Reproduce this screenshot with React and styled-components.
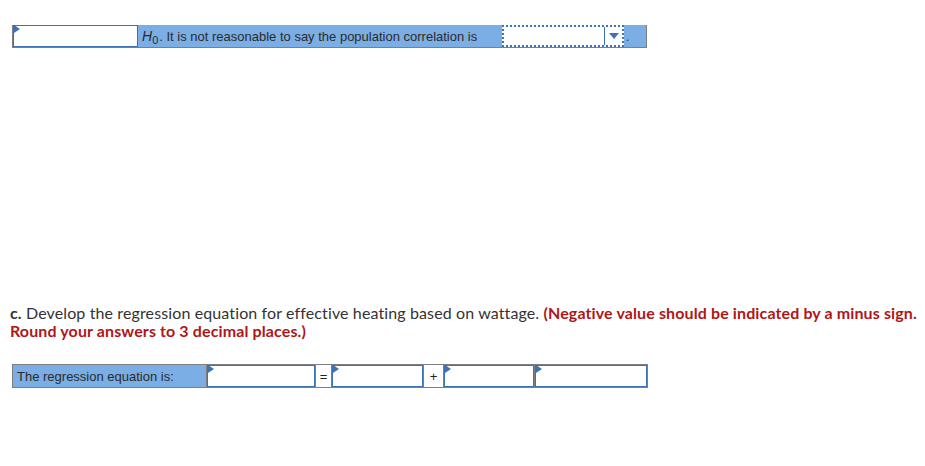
import React from "react";
import styled, { createGlobalStyle } from "styled-components";

const Global = createGlobalStyle`
  html, body { margin: 0; padding: 0; background: #fff; }
  body { font-family: "Liberation Sans", Arial, sans-serif; }
`;

const Page = styled.div`
  width: 925px;
  height: 466px;
  padding: 25px 0 0 13px;
  box-sizing: border-box;
  overflow: hidden;
`;

const TopRow = styled.div`
  display: inline-flex;
  align-items: stretch;
  height: 22px;
  border-left: 1px solid #7f7f7f;
  border-right: 1px solid #7f7f7f;
  border-bottom: 1px solid #7f7f7f;
  margin-left: -1px;
`;

const InputBox = styled.div`
  position: relative;
  width: ${(p) => p.$w}px;
  box-sizing: border-box;
  border: 1px solid #3d72b8;
  background: #fff;
  &::before {
    content: "";
    position: absolute;
    left: 0;
    top: 0;
    border-top: 4px solid transparent;
    border-bottom: 4px solid transparent;
    border-left: 6px solid #3d72b8;
    transform: translateY(-1px);
  }
`;

const BlueCell = styled.div`
  display: flex;
  align-items: center;
  width: ${(p) => p.$w}px;
  box-sizing: border-box;
  background: #7aaee4;
  color: #2b2b2b;
  font-size: 13px;
  padding-left: 4px;
  white-space: nowrap;
`;

const H = styled.i`
  font-style: italic;
  font-size: 14px;
`;

const Sub = styled.span`
  font-size: 11px;
  position: relative;
  top: 4px;
  margin-right: 1px;
`;

const Dropdown = styled.div`
  display: flex;
  width: 122px;
  box-sizing: border-box;
  border: 2px dotted #3d72b8;
  background: #fff;
`;

const DropBody = styled.div`
  flex: 1;
`;

const DropArrow = styled.div`
  width: 17px;
  border-left: 1px solid #3d72b8;
  display: flex;
  align-items: center;
  justify-content: center;
`;

const Dot = styled.div`
  display: flex;
  align-items: flex-end;
  width: 22px;
  background: #7aaee4;
  color: #333;
  font-size: 12px;
  padding: 0 0 3px 2px;
  box-sizing: border-box;
`;

const Para = styled.p`
  margin: 253px 0 0 -3px;
  font-family: "Lato", "Open Sans", sans-serif;
  font-size: 16px;
  letter-spacing: 0.12px;
  line-height: 18px;
  color: #333;
  width: 915px;
`;

const Red = styled.b`
  color: #b01616;
  font-weight: 700;
`;

const Bold = styled.b`
  font-weight: 700;
`;

const EqRow = styled.div`
  display: inline-flex;
  margin-top: 24px;
  margin-left: -1px;
  height: 24px;
  background: #7f7f7f;
  padding: 1px;
  gap: 1px;
  box-sizing: border-box;
`;

const EqLabel = styled.div`
  display: flex;
  align-items: center;
  width: 193px;
  background: #7aaee4;
  color: #2b2b2b;
  font-size: 13px;
  padding-left: 4px;
  box-sizing: border-box;
`;

const Op = styled.div`
  display: flex;
  align-items: center;
  justify-content: center;
  width: ${(p) => p.$w}px;
  background: #fff;
  color: #222;
  font-size: 13px;
`;

export default function App() {
  return (
    <Page>
      <Global />
      <TopRow>
        <InputBox $w={125} />
        <BlueCell $w={364}>
          <H>H</H>
          <Sub>0</Sub>. It is not reasonable to say the population correlation is
        </BlueCell>
        <Dropdown>
          <DropBody />
          <DropArrow>
            <svg width="10" height="6" viewBox="0 0 10 6">
              <path d="M0 0 H10 L5 6 Z" fill="#3d72b8" />
            </svg>
          </DropArrow>
        </Dropdown>
        <Dot>.</Dot>
      </TopRow>
      <Para>
        <Bold>c.</Bold> Develop the regression equation for effective heating based on wattage.{" "}
        <Red>(Negative value should be indicated by a minus sign.</Red>
        <br />
        <Red>Round your answers to 3 decimal places.)</Red>
      </Para>
      <EqRow>
        <EqLabel>The regression equation is:</EqLabel>
        <InputBox $w={108} />
        <Op $w={15}>=</Op>
        <InputBox $w={91} />
        <Op $w={19}>+</Op>
        <InputBox $w={90} />
        <InputBox $w={112} />
      </EqRow>
    </Page>
  );
}
